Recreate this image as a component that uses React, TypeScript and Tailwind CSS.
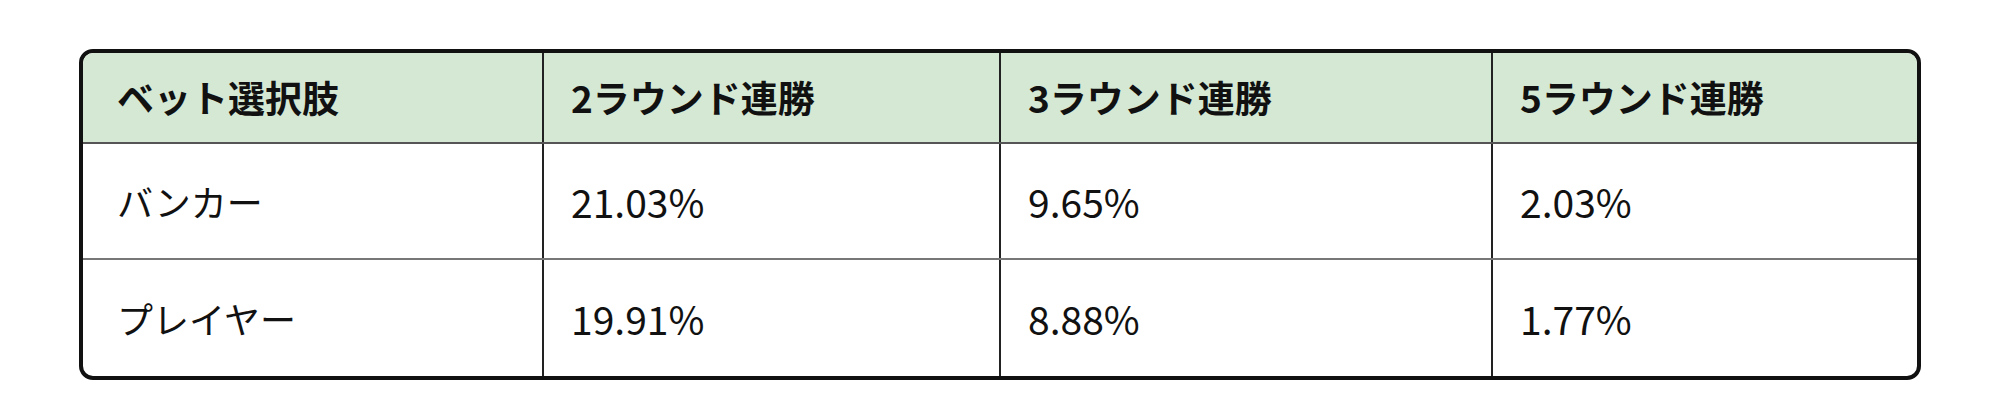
import React from "react";

const widths = ["w-[459px]", "w-[457px]", "w-[492px]", "w-[426px]"];

const header = ["ベット選択肢", "2ラウンド連勝", "3ラウンド連勝", "5ラウンド連勝"];
const rows = [
  ["バンカー", "21.03%", "9.65%", "2.03%"],
  ["プレイヤー", "19.91%", "8.88%", "1.77%"],
];

export default function App() {
  return (
    <div
      className="w-[1999px] h-[416px] bg-white pt-[49px] pl-[79px]"
      style={{ fontFamily: '"Noto Sans CJK JP", "Noto Sans", sans-serif' }}
    >
      <div className="w-[1842px] border-4 border-[#111] rounded-[14px] overflow-hidden text-[#111]">
        <div className="flex h-[91px] bg-[#d5e8d4] border-b-2 border-[#555]">
          {header.map((h, i) => (
            <div
              key={i}
              className={`${widths[i]} flex items-center font-bold text-[37px] leading-none ${
                i === 0 ? "pl-[34px]" : "pl-[27px] border-l-2 border-[#222]"
              }`}
            >
              {h}
            </div>
          ))}
        </div>
        {rows.map((r, ri) => (
          <div
            key={ri}
            className={`flex h-[116px] ${ri === 0 ? "border-b-2 border-[#777]" : ""}`}
          >
            {r.map((c, i) => (
              <div
                key={i}
                className={`${widths[i]} flex items-center leading-none ${
                  i === 0
                    ? "pl-[34px] text-[36px]"
                    : "pl-[27px] border-l-2 border-[#222] text-[39px]"
                }`}
              >
                {c}
              </div>
            ))}
          </div>
        ))}
      </div>
    </div>
  );
}
